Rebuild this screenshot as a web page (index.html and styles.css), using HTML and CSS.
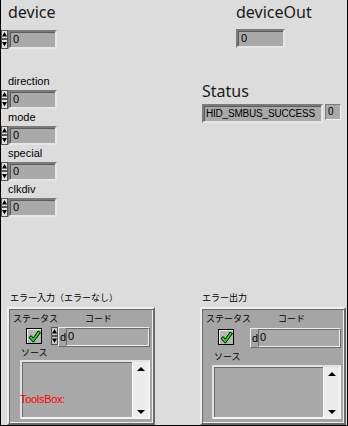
FILE: index.html
```html
<!DOCTYPE html>
<html lang="ja">
<head>
<meta charset="utf-8">
<link rel="stylesheet" href="styles.css">
</head>
<body>
<div class="panel">
  <div class="top">
    <div class="col-left">
      <div class="big-label">device</div>
      <div class="numrow">
        <svg class="spin" width="7" height="19" viewBox="0 0 7 19"><rect x="0" y="0" width="7" height="19" fill="#9a9a9a"/><rect x="0.5" y="0.5" width="6" height="8" fill="#e4e4e4" stroke="#555"/><rect x="0.5" y="9.5" width="6" height="9" fill="#e4e4e4" stroke="#555"/><path d="M3.5 2 L6 6.5 L1 6.5 Z" fill="#000"/><path d="M1 12 L6 12 L3.5 16.5 Z" fill="#000"/></svg>
        <div class="numbox">0</div>
      </div>
      <div class="small-label first">direction</div>
      <div class="numrow">
        <svg class="spin" width="7" height="19" viewBox="0 0 7 19"><rect x="0" y="0" width="7" height="19" fill="#9a9a9a"/><rect x="0.5" y="0.5" width="6" height="8" fill="#e4e4e4" stroke="#555"/><rect x="0.5" y="9.5" width="6" height="9" fill="#e4e4e4" stroke="#555"/><path d="M3.5 2 L6 6.5 L1 6.5 Z" fill="#000"/><path d="M1 12 L6 12 L3.5 16.5 Z" fill="#000"/></svg>
        <div class="numbox">0</div>
      </div>
      <div class="small-label">mode</div>
      <div class="numrow">
        <svg class="spin" width="7" height="19" viewBox="0 0 7 19"><rect x="0" y="0" width="7" height="19" fill="#9a9a9a"/><rect x="0.5" y="0.5" width="6" height="8" fill="#e4e4e4" stroke="#555"/><rect x="0.5" y="9.5" width="6" height="9" fill="#e4e4e4" stroke="#555"/><path d="M3.5 2 L6 6.5 L1 6.5 Z" fill="#000"/><path d="M1 12 L6 12 L3.5 16.5 Z" fill="#000"/></svg>
        <div class="numbox">0</div>
      </div>
      <div class="small-label">special</div>
      <div class="numrow">
        <svg class="spin" width="7" height="19" viewBox="0 0 7 19"><rect x="0" y="0" width="7" height="19" fill="#9a9a9a"/><rect x="0.5" y="0.5" width="6" height="8" fill="#e4e4e4" stroke="#555"/><rect x="0.5" y="9.5" width="6" height="9" fill="#e4e4e4" stroke="#555"/><path d="M3.5 2 L6 6.5 L1 6.5 Z" fill="#000"/><path d="M1 12 L6 12 L3.5 16.5 Z" fill="#000"/></svg>
        <div class="numbox">0</div>
      </div>
      <div class="small-label">clkdiv</div>
      <div class="numrow">
        <svg class="spin" width="7" height="19" viewBox="0 0 7 19"><rect x="0" y="0" width="7" height="19" fill="#9a9a9a"/><rect x="0.5" y="0.5" width="6" height="8" fill="#e4e4e4" stroke="#555"/><rect x="0.5" y="9.5" width="6" height="9" fill="#e4e4e4" stroke="#555"/><path d="M3.5 2 L6 6.5 L1 6.5 Z" fill="#000"/><path d="M1 12 L6 12 L3.5 16.5 Z" fill="#000"/></svg>
        <div class="numbox">0</div>
      </div>
    </div>
    <div class="col-right">
      <div class="out-group">
        <div class="big-label">deviceOut</div>
        <div class="numbox ind">0</div>
      </div>
      <div class="status-group">
        <div class="big-label">Status</div>
        <div class="status-row">
          <div class="statusbox">HID_SMBUS_SUCCESS</div>
          <div class="valbox">0</div>
        </div>
      </div>
    </div>
  </div>
  <div class="bottom">
    <div class="err err-in">
      <div class="jp-label">エラー入力（エラーなし）</div>
      <div class="cluster">
        <div class="cl-head"><span class="jp">ステータス</span><span class="jp code-lbl">コード</span></div>
        <div class="cl-row">
          <div class="check"><svg width="13" height="13" viewBox="0 0 13 13"><path d="M1 7.5 L3.2 5.6 L5.2 8.2 L10.2 1 L12.4 2.6 L5.4 12.2 Z" fill="#1fe51f" stroke="#000" stroke-width="1" stroke-linejoin="round"/></svg></div>
          <svg class="spin code-spin" width="7" height="18" viewBox="0 0 7 18"><rect x="0" y="0" width="7" height="18" fill="#9a9a9a"/><rect x="0.5" y="0.5" width="6" height="8" fill="#c8c8c8" stroke="#555"/><rect x="0.5" y="9.5" width="6" height="8" fill="#c8c8c8" stroke="#555"/><path d="M3.5 2 L6 6.5 L1 6.5 Z" fill="#000"/><path d="M1 11.5 L6 11.5 L3.5 16 Z" fill="#000"/></svg>
          <div class="codeframe"><span class="radix">d</span><div class="codebox">0</div></div>
        </div>
        <div class="jp src-lbl">ソース</div>
        <div class="srcbox">
          <div class="src-text"><span class="red">ToolsBox:</span></div>
          <div class="scroll"><span class="arr up"></span><span class="arr down"></span></div>
        </div>
      </div>
    </div>
    <div class="err err-out">
      <div class="jp-label">エラー出力</div>
      <div class="cluster">
        <div class="cl-head"><span class="jp">ステータス</span><span class="jp code-lbl">コード</span></div>
        <div class="cl-row">
          <div class="check"><svg width="13" height="13" viewBox="0 0 13 13"><path d="M1 7.5 L3.2 5.6 L5.2 8.2 L10.2 1 L12.4 2.6 L5.4 12.2 Z" fill="#1fe51f" stroke="#000" stroke-width="1" stroke-linejoin="round"/></svg></div>
          <div class="codeframe"><span class="radix">d</span><div class="codebox">0</div></div>
        </div>
        <div class="jp src-lbl">ソース</div>
        <div class="srcbox">
          <div class="src-text"></div>
          <div class="scroll"><span class="arr up"></span><span class="arr down"></span></div>
        </div>
      </div>
    </div>
  </div>
</div>
</body>
</html>
```
FILE: styles.css
```css
* { box-sizing: border-box; }
html, body { margin: 0; padding: 0; }
body { width: 348px; height: 426px; background: #dcdcdc; overflow: hidden; }
.panel {
  width: 348px; height: 426px;
  border: 1px solid #000; border-top: none;
  display: flex; flex-direction: column;
  font-family: "Liberation Sans", Arial, sans-serif;
  color: #000;
}
.top { display: flex; flex: 1; }
.col-left { width: 199px; display: flex; flex-direction: column; }
.col-right { flex: 1; display: flex; flex-direction: column; }
.big-label {
  font-family: "Noto Sans", sans-serif;
  font-size: 16px; line-height: 20px; height: 30px; padding-top: 2px;
  padding-left: 7px; color: #1a1a1a;
}
.numrow { display: flex; height: 19px; margin-bottom: 1px; }
.spin { display: block; flex: none; }
.numbox {
  width: 49px; height: 19px;
  background: #a9a9a9;
  border: 2px solid; border-color: #7b7b7b #e6e6e6 #e6e6e6 #7b7b7b;
  box-shadow: inset 1px 1px 0 #5c5c5c;
  font-size: 11px; line-height: 15px; padding-left: 3px;
}
.small-label { font-size: 11px; line-height: 14px; height: 14px; margin-bottom: 2px; padding-left: 7px; }
.small-label.first { margin-top: 24px; }
.out-group { padding-left: 36px; }
.out-group .big-label { padding-left: 0; height: 29px; }
.status-group { margin-top: 32px; padding-left: 2px; }
.status-group .big-label { padding-left: 0; height: 24px; padding-top: 0; line-height: 22px; }
.status-row { display: flex; align-items: flex-start; gap: 2px; }
.statusbox {
  width: 121px; height: 19px; background: #a9a9a9;
  border: 2px solid; border-color: #7b7b7b #e6e6e6 #e6e6e6 #7b7b7b;
  box-shadow: inset 1px 1px 0 #5c5c5c;
  font-size: 10px; line-height: 15px; padding-left: 2px; letter-spacing: -0.2px;
}
.valbox {
  width: 16px; height: 16px; background: #a9a9a9;
  border: 1px solid; border-color: #7b7b7b #f2f2f2 #f2f2f2 #7b7b7b;
  font-size: 10px; line-height: 14px; padding-left: 2px;
}
.bottom { display: flex; height: 134px; gap: 45px; padding-left: 6px; }
.err { display: flex; flex-direction: column; }
.err-in { width: 148px; }
.err-out { width: 146px; }
.jp, .jp-label { font-family: "Noto Sans CJK JP", sans-serif; font-size: 9px; }
.jp-label { height: 16px; line-height: 12px; padding-left: 3px; padding-top: 1px; }
.err-out .jp-label { padding-left: 2px; }
.cluster {
  flex: 1;
  background: #a5a5a5;
  border: 2px solid; border-color: #efefef #6a6a6a #6a6a6a #efefef;
  box-shadow: inset 1px 1px 0 #6a6a6a, inset -1px -1px 0 #efefef;
  padding: 4px 3px 4px 4px;
  display: flex; flex-direction: column;
}
.cl-head { height: 14px; line-height: 12px; display: flex; }
.cl-head .code-lbl { margin-left: 27px; }
.cl-row { display: flex; height: 20px; align-items: flex-start; }
.check {
  width: 16px; height: 16px; margin: 1px 9px 0 13px;
  background: #b8b8b8; border: 1px solid #000;
  box-shadow: inset 1px 1px 0 #eee;
  display: flex; align-items: center; justify-content: center;
}
.codeframe {
  flex: 1; height: 20px; display: flex; align-items: center;
  border: 1px solid; border-color: #eee #6a6a6a #6a6a6a #eee;
  background: #a5a5a5;
}
.radix { font-size: 11px; width: 7px; padding-left: 1px; }
.codebox {
  flex: 1; height: 18px; background: #a9a9a9;
  border: 1px solid; border-color: #6a6a6a #eee #eee #6a6a6a;
  font-size: 11px; line-height: 15px; padding-left: 1px;
}
.src-lbl { height: 13px; line-height: 12px; padding-left: 8px; }
.srcbox {
  flex: 1; margin-left: 7px; display: flex;
  border: 2px solid; border-color: #e2e2e2 #f4f4f4 #f4f4f4 #e2e2e2;
  box-shadow: inset 1px 1px 0 #6a6a6a;
  background: #a9a9a9;
}
.src-text { flex: 1; position: relative; }
.red { position: absolute; left: -2px; top: 31px; color: #ff0000; font-size: 11px; letter-spacing: -0.3px; }
.scroll { width: 16px; background: #ececec; border-left: 1px solid #fff; display: flex; flex-direction: column; justify-content: space-between; align-items: center; padding: 5px 0 3px; }
.arr { width: 0; height: 0; border-left: 4px solid transparent; border-right: 4px solid transparent; }
.arr.up { border-bottom: 4px solid #000; }
.arr.down { border-top: 4px solid #000; }
.err-out .check { margin: 1px 16px 0 12px; }
.err-out .cl-row { margin-top: 1px; }
.err-out .src-lbl { padding-left: 8px; height: 17px; padding-top: 3px; }
.err-out .srcbox { margin-left: 6px; }
```
